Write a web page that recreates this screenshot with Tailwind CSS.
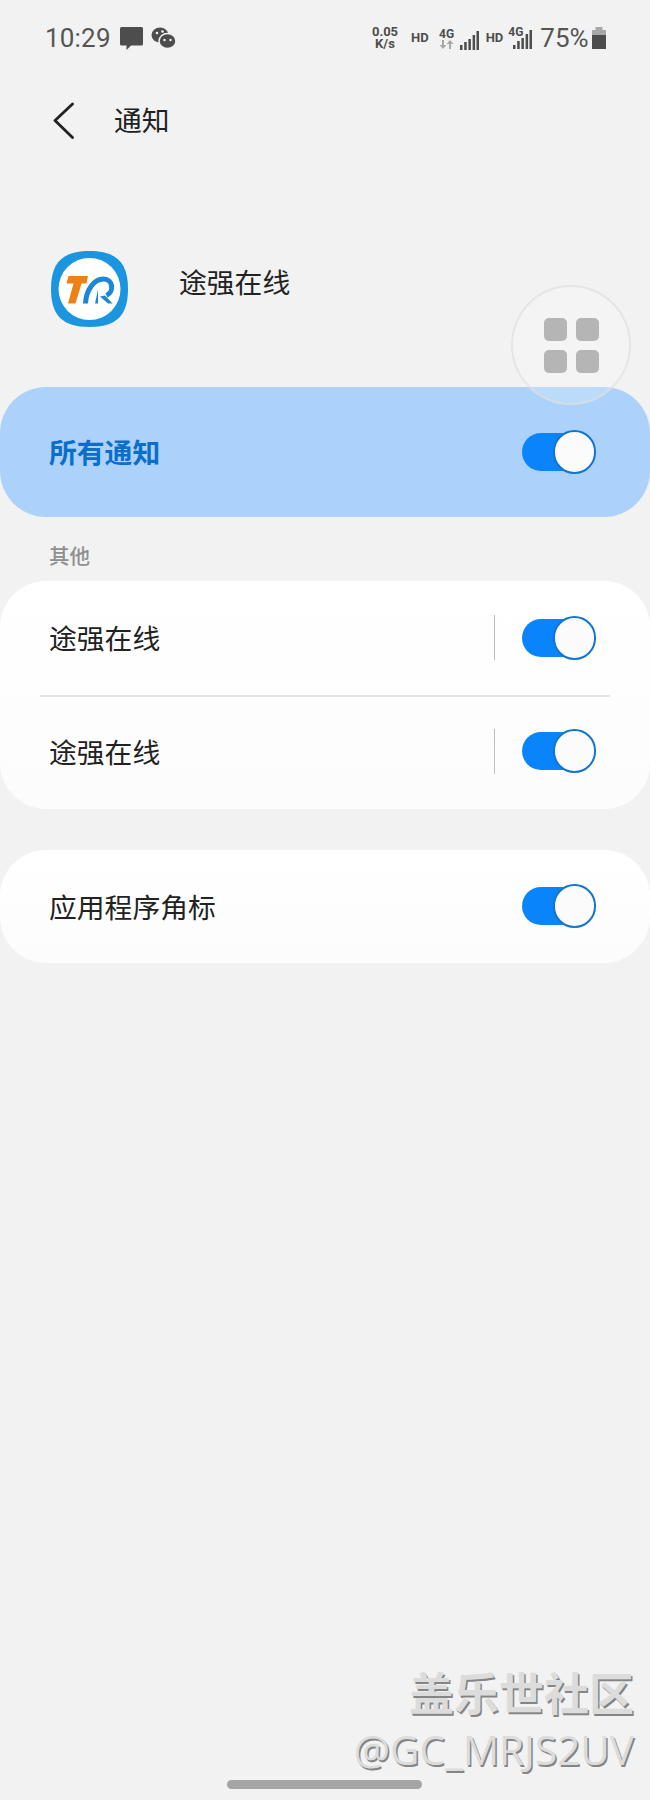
<!DOCTYPE html>
<html lang="zh-CN">
  <head>
    <meta charset="UTF-8" />
    <meta name="viewport" content="width=device-width, initial-scale=1.0" />
    <title>通知</title>
    <script src="https://cdn.jsdelivr.net/npm/@tailwindcss/browser@4"></script>
  </head>
  <body class="bg-[#f2f2f2] font-['Noto_Sans_CJK_SC','Noto_Sans',sans-serif] text-[#222]">
    <div class="relative w-[650px] h-[1800px] overflow-hidden flex flex-col">
      <!-- Status bar -->
      <div class="h-[76px] shrink-0 flex items-center pl-[45px] text-[#555] font-['Roboto',sans-serif]">
        <span class="text-[26px] w-[63px] tracking-[0.2px]">10:29</span>
        <svg class="ml-[12px] w-[23px] h-[24px]" viewBox="0 0 23 24" fill="#4d4d4d">
          <path d="M1.500 1h20a1.500 1.500 0 0 1 1.500 1.500v15.500a1.500 1.500 0 0 1-1.500 1.500H11l-4.500 4.500v-4.500H1.500A1.500 1.500 0 0 1 0 18V2.500A1.500 1.500 0 0 1 1.500 1z" />
        </svg>
        <svg class="ml-[8px] w-[25px] h-[22px]" viewBox="0 0 25 22">
          <ellipse cx="9" cy="8" rx="8.500" ry="7.500" fill="#4d4d4d" />
          <ellipse cx="16.500" cy="14" rx="8.500" ry="7.500" fill="#4d4d4d" stroke="#f2f2f2" stroke-width="1.500" />
          <circle cx="6" cy="6" r="1.300" fill="#f2f2f2" />
          <circle cx="11.500" cy="4.500" r="1.300" fill="#f2f2f2" />
          <circle cx="13.500" cy="13" r="1.200" fill="#f2f2f2" />
          <circle cx="19.500" cy="13" r="1.200" fill="#f2f2f2" />
        </svg>
        <div class="ml-[196px] w-[26px] flex flex-col items-center text-[13px] leading-[12px] font-bold text-[#4d4d4d]">
          <span>0.05</span>
          <span>K/s</span>
        </div>
        <span class="ml-[13px] text-[13px] font-bold text-[#4d4d4d]">HD</span>
        <div class="ml-[10px] w-[16px] flex flex-col items-center">
          <span class="text-[12px] leading-[12px] font-bold text-[#4d4d4d]">4G</span>
          <svg class="w-[15px] h-[9px]" viewBox="0 0 15 9" fill="#a8a8a8">
            <path d="M3 0h2v5h2.500L4 9 .5 5H3zM10 9h2V4h2.500L11 0 7.500 4H10z" />
          </svg>
        </div>
        <svg class="ml-[5px] w-[19px] h-[19px] mt-[4px]" viewBox="0 0 19 19" fill="#4d4d4d">
          <rect x="0" y="14" width="2.500" height="5" />
          <rect x="4.200" y="11" width="2.500" height="8" />
          <rect x="8.400" y="8" width="2.500" height="11" />
          <rect x="12.600" y="4" width="2.500" height="15" />
          <rect x="16.500" y="0" width="2.500" height="19" />
        </svg>
        <span class="ml-[7px] text-[13px] font-bold text-[#4d4d4d]">HD</span>
        <div class="relative ml-[5px] w-[24px] h-[22px]">
          <span class="absolute left-0 top-[-1px] text-[12px] leading-[12px] font-bold text-[#4d4d4d]">4G</span>
          <svg class="absolute left-[5px] top-[3px] w-[19px] h-[19px]" viewBox="0 0 19 19" fill="#4d4d4d">
            <rect x="0" y="15" width="2.500" height="4" />
            <rect x="4.200" y="11" width="2.500" height="8" />
            <rect x="8.400" y="8" width="2.500" height="11" />
            <rect x="12.600" y="4" width="2.500" height="15" />
            <rect x="16.500" y="0" width="2.500" height="19" />
          </svg>
        </div>
        <span class="ml-[8px] text-[26px] leading-none w-[49px]">75%</span>
        <svg class="ml-[3px] w-[14px] h-[22px]" viewBox="0 0 14 22">
          <rect x="3.500" y="0" width="7" height="3" fill="#a8a8a8" />
          <rect x="0" y="3" width="14" height="5" fill="#a8a8a8" />
          <rect x="0" y="8" width="14" height="14" fill="#4d4d4d" />
        </svg>
      </div>

      <!-- Header -->
      <div class="h-[88px] shrink-0 flex items-center pl-[53px]">
        <svg class="w-[21px] h-[37px]" viewBox="0 0 21 37" fill="none" stroke="#222" stroke-width="2.800" stroke-linecap="round" stroke-linejoin="round">
          <path d="M19.500 2 2 18.500 19.500 35.500" />
        </svg>
        <span class="ml-[40px] text-[27.800px] leading-none">通知</span>
      </div>

      <!-- App row -->
      <div class="mt-[87px] h-[76px] shrink-0 flex pl-[51px]">
        <svg class="w-[77px] h-[76px]" viewBox="51 251 77 76">
          <path d="M89.500 251c27 0 38.500 11.500 38.500 38s-11.500 38-38.500 38S51 315.500 51 289s11.500-38 38.500-38z" fill="#1b95df" />
          <circle cx="89.500" cy="289" r="31" fill="#fff" />
          <path d="M68.500 276H88l-1.500 7.500h-5L75.500 303.500h-7.500l5.500-20h-7z" fill="#ee8114" />
          <path d="M85.500 303.500C86 290 94 279 103.500 279c9.500 0 11 12.500 3 16.500" fill="none" stroke="#1b87d6" stroke-width="5" />
          <path d="M98 303.500v-14l-3 14z" fill="#1b87d6" />
          <path d="M100 296.500l8 7h4.500l-7.500-8z" fill="#1b87d6" />
        </svg>
        <span class="ml-[51px] mt-[17px] text-[27.800px] leading-none">途强在线</span>
      </div>

      <!-- All notifications -->
      <div class="mt-[60px] h-[130px] shrink-0 rounded-[46px] bg-[#acd2fb] flex items-center justify-between pl-[49px] pr-[59px]">
        <span class="text-[27.800px] leading-none font-bold text-[#0a6fcb] -mt-[1px]">所有通知</span>
        <div class="w-[69px] h-[38px] rounded-full bg-[#0a84fb] flex items-center justify-end">
          <div class="w-[43px] h-[44px] -mr-[5px] shrink-0 rounded-full bg-[#fbfbfb] border-[2.500px] border-[#1275d2]"></div>
        </div>
      </div>

      <div class="h-[64px] shrink-0 pl-[49px] pt-[26px] text-[20.500px] leading-[24px] font-medium text-[#8f8f8f]">其他</div>

      <!-- Channels -->
      <div class="h-[228px] shrink-0 rounded-[46px] bg-gradient-to-b from-white to-[#fcfcfc] flex flex-col">
        <div class="h-[114px] pb-[1px] flex items-center pl-[49px] pr-[59px]">
          <span class="text-[27.800px] leading-none mt-[1px]">途强在线</span>
          <div class="ml-auto w-px h-[45px] bg-[#bdbdbd]"></div>
          <div class="ml-[27px] w-[69px] h-[38px] rounded-full bg-[#0a84fb] flex items-center justify-end">
            <div class="w-[43px] h-[44px] -mr-[5px] shrink-0 rounded-full bg-[#fbfbfb] border-[2.500px] border-[#1275d2]"></div>
          </div>
        </div>
        <div class="mx-[40px] h-[2px] shrink-0 bg-[#e4e4e4]"></div>
        <div class="h-[112px] pb-[4px] flex items-center pl-[49px] pr-[59px]">
          <span class="text-[27.800px] leading-none mt-[1px]">途强在线</span>
          <div class="ml-auto w-px h-[45px] bg-[#bdbdbd]"></div>
          <div class="ml-[27px] w-[69px] h-[38px] rounded-full bg-[#0a84fb] flex items-center justify-end">
            <div class="w-[43px] h-[44px] -mr-[5px] shrink-0 rounded-full bg-[#fbfbfb] border-[2.500px] border-[#1275d2]"></div>
          </div>
        </div>
      </div>

      <!-- Badge -->
      <div class="mt-[41px] h-[113px] pb-[2px] shrink-0 rounded-[46px] bg-gradient-to-b from-white to-[#fcfcfc] flex items-center justify-between pl-[49px] pr-[59px]">
        <span class="text-[27.800px] leading-none mt-[2px]">应用程序角标</span>
        <div class="w-[69px] h-[38px] rounded-full bg-[#0a84fb] flex items-center justify-end">
          <div class="w-[43px] h-[44px] -mr-[5px] shrink-0 rounded-full bg-[#fbfbfb] border-[2.500px] border-[#1275d2]"></div>
        </div>
      </div>

      <!-- Floating menu button -->
      <div class="absolute left-[511px] top-[285px] w-[120px] h-[120px] rounded-full bg-white/20 border-2 border-[#dedede]/70 grid grid-cols-[23px_23px] grid-rows-[23px_23px] gap-[9px] content-center justify-center">
        <div class="rounded-[5px] bg-[#b5b5b5]"></div>
        <div class="rounded-[5px] bg-[#b5b5b5]"></div>
        <div class="rounded-[5px] bg-[#b5b5b5]"></div>
        <div class="rounded-[5px] bg-[#b5b5b5]"></div>
      </div>

      <!-- Watermark -->
      <div class="absolute right-[16px] top-[1663px] flex flex-col items-end text-[#dcdcdc] [text-shadow:1.500px_2px_0_#858585]">
        <span class="text-[45px] leading-[58px] font-bold">盖乐世社区</span>
        <span class="mt-[6px] text-[40.500px] leading-[46px] font-['Open_Sans',sans-serif]">@GC_MRJS2UV</span>
      </div>

      <!-- Home indicator -->
      <div class="mt-auto mb-[11px] ml-[227px] w-[195px] h-[9px] rounded-full bg-[#a5a5a5]"></div>
    </div>
  </body>
</html>
